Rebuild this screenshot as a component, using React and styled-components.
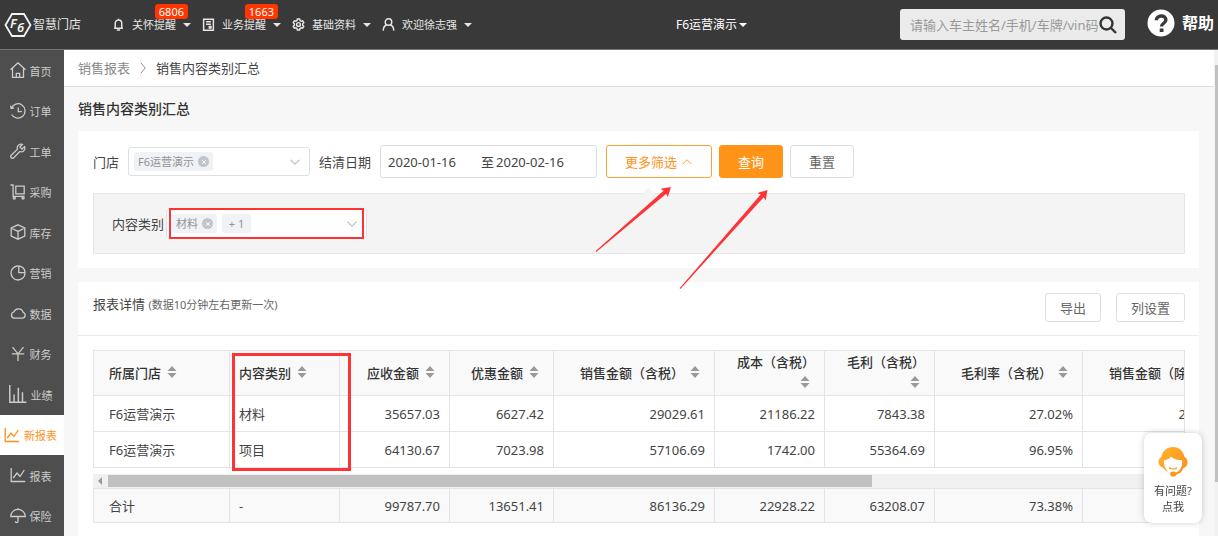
import styled, { createGlobalStyle } from 'styled-components'

const menus = [
    { icon: 'bell', label: '关怀提醒', badge: '6806' },
    { icon: 'doc', label: '业务提醒', badge: '1663' },
    { icon: 'gear', label: '基础资料' },
    { icon: 'user', label: '欢迎徐志强' },
]

const sideLinks = [
    { icon: 'home', label: '首页' },
    { icon: 'history', label: '订单' },
    { icon: 'wrench', label: '工单' },
    { icon: 'cart', label: '采购' },
    { icon: 'box', label: '库存' },
    { icon: 'pie', label: '营销' },
    { icon: 'cloud', label: '数据' },
    { icon: 'yen', label: '财务' },
    { icon: 'bars', label: '业绩' },
    { icon: 'chart', label: '新报表', active: true },
    { icon: 'chart', label: '报表' },
    { icon: 'umbrella', label: '保险' },
]

const columns = [
    { title: '所属门店', width: 136 },
    { title: '内容类别', width: 110 },
    { title: '应收金额', width: 110, num: true },
    { title: '优惠金额', width: 104, num: true },
    { title: '销售金额（含税）', width: 161, num: true },
    { title: '成本（含税）', width: 110, num: true },
    { title: '毛利（含税）', width: 110, num: true },
    { title: '毛利率（含税）', width: 148, num: true },
    { title: '销售金额（除税）', width: 161, num: true },
]

const rows = [
    ['F6运营演示', '材料', '35657.03', '6627.42', '29029.61', '21186.22', '7843.38', '27.02%', '25689.92'],
    ['F6运营演示', '项目', '64130.67', '7023.98', '57106.69', '1742.00', '55364.69', '96.95%', ''],
]

const total = ['合计', '-', '99787.70', '13651.41', '86136.29', '22928.22', '63208.07', '73.38%', '']

// line icons, all on a 16 x 16 grid
const shapes = {
    bell: <path d="M2.500 12.500h11M4 12.300V6.500a4 4 0 0 1 8 0v5.800M8 2.500V1M6 14.800h4" />,
    doc: <path d="M2 1.500h12v13.500h-12zM5 4.700h6M5 7.600h6M9 10.400h2v1.800H9z" />,
    gear: (
        <>
            <path d="M6.600 1.300h2.800l.5 1.900 1.300.7 1.900-.5 1.400 2.400-1.400 1.400v1.600l1.400 1.400-1.400 2.400-1.900-.5-1.300.7-.5 1.900H6.600l-.5-1.900-1.300-.7-1.900.5-1.400-2.400 1.400-1.400V7.200L1.500 5.800l1.400-2.400 1.900.5 1.300-.7z" />
            <circle cx="8" cy="8" r="2.300" />
        </>
    ),
    user: (
        <>
            <circle cx="8" cy="5" r="4" />
            <path d="M1.500 15.500c.2-4 1.800-6.200 4.200-7.200M14.500 15.500c-.2-4-1.800-6.200-4.200-7.200" />
        </>
    ),
    home: <path d="M.5 7.800 8 .8l7.500 7M2.500 6.300v9h11V6.300M6.300 15v-3.700h3.400V15" />,
    history: <path d="M1.200 5.200A7.200 7.200 0 1 1 1.600 11.500M.5 2.600l.7 2.800 2.900-.5M8.300 4.500v4.200h3.600" />,
    wrench: <path d="M14.600 3.600 12 6.100 9.900 4 12.400 1.400C10 .5 7.300 2 7.200 4.600c0 .7.1 1.100.3 1.600L1.200 12.200c-.8.8-.7 1.800 0 2.500s1.800.7 2.500 0l6.100-6.200c2.900 1.100 6-1.500 4.800-4.900z" />,
    cart: (
        <>
            <path d="M.5 1h2.600v11.400h11.400M5.800 2.200h8.400v7.600H5.800z" />
            <circle cx="4.300" cy="14" r="1.100" />
            <circle cx="13" cy="14" r="1.100" />
        </>
    ),
    box: <path d="M8 .8 14.800 4v8L8 15.200 1.200 12V4zM1.200 4 8 7.400 14.800 4M8 7.400v7.800" />,
    pie: <path d="M8 1a7 7 0 1 0 7 7.200M8.800 1v6.600h6.200A6.500 6.500 0 0 0 8.800 1z" />,
    cloud: <path d="M4 13.200h8.300a3 3 0 0 0 .9-5.800A5 5 0 0 0 3.800 7 3.200 3.200 0 0 0 4 13.200z" />,
    yen: <path d="M2.500 1.200 8 7.800l5.500-6.600M8 7.800V15M1.800 7.800h12.400" />,
    bars: <path d="M.7 0v15.300h14.800M4.500 15V8.500M8.300 15V2.500M12 15V6.500" />,
    chart: <path d="M1.200 1v13.500h14M3.200 11 7 6l3 3.500L14.300 3" />,
    umbrella: <path d="M.8 8.500a7.200 7.200 0 0 1 14.400 0zM8 1.500V0M8 8.500v4.800c0 1.700-2.600 1.700-2.700 0" />,
    down: <path d="m2 5 6 6 6-6" />,
    up: <path d="m2 11 6-6 6 6" />,
    right: <path d="m5 1 6 7-6 7" />,
    cross: <path d="m3 3 10 10M13 3 3 13" />,
}

const Icon = ({ name, size = 16, stroke = 1.3 }) => (
    <IconSvg width={size} height={size} viewBox="0 0 16 16" strokeWidth={stroke} aria-hidden="true">
        {shapes[name]}
    </IconSvg>
)

const Tag = ({ children, closable }) => (
    <TagBox>
        {children}
        {closable && (
            <TagClose type="button" aria-label="移除">
                <Icon name="cross" size={6} stroke={2.6} />
            </TagClose>
        )}
    </TagBox>
)

const MultiSelect = ({ id, width, options, children }) => (
    <SelectBox $width={width}>
        {children}
        <select id={id} defaultValue="">
            <option value=""></option>
            {options.map((o) => <option key={o}>{o}</option>)}
        </select>
        <Icon name="down" size={12} stroke={1.6} />
    </SelectBox>
)

const Cols = () => (
    <colgroup>
        {columns.map((c) => <Col key={c.title} $width={c.width} />)}
    </colgroup>
)

const Cells = ({ values }) => values.map((v, i) => (
    <Td key={columns[i].title} $num={columns[i].num}>{v}</Td>
))

const Header = () => (
    <TopBar>
        <Logo href="#home">
            <svg width="28" height="26" viewBox="0 0 28 26" aria-hidden="true">
                <path d="M8 2h12l6.500 11L20 24H8L1.500 13z" fill="none" stroke="#f2f2f2" strokeWidth="1.800" />
                <text x="6" y="16" fill="#f2f2f2">F</text>
                <text x="13" y="20" fill="#f2f2f2">6</text>
            </svg>
            智慧门店
        </Logo>
        <Menu>
            {menus.map((m) => (
                <MenuButton type="button" key={m.label}>
                    <Icon name={m.icon} size={13} stroke={1.8} />
                    <span>{m.label}</span>
                    <Caret />
                    {m.badge && <Badge>{m.badge}</Badge>}
                </MenuButton>
            ))}
        </Menu>
        <Spacer $grow={4} />
        <ShopButton type="button">F6运营演示<Caret /></ShopButton>
        <Spacer $grow={3} />
        <Search>
            <input type="text" aria-label="搜索" placeholder="请输入车主姓名/手机/车牌/vin码" />
            <button type="submit" aria-label="搜索">
                <svg width="18" height="18" viewBox="0 0 18 18" fill="none" stroke="#333" strokeWidth="2.400" aria-hidden="true">
                    <circle cx="7.500" cy="7.500" r="6" />
                    <path d="m12 12 5 5" />
                </svg>
            </button>
        </Search>
        <Help href="#help">
            <svg width="28" height="28" viewBox="0 0 28 28" aria-hidden="true">
                <circle cx="14" cy="14" r="13.500" fill="#fff" />
                <path d="M9.300 11.200c.1-5.600 9.600-5.600 9.600-.3 0 3.400-4.400 3.300-4.400 6.600" fill="none" stroke="#393939" strokeWidth="3.400" />
                <path d="M12.700 19.500h3.800V23h-3.800z" fill="#393939" />
            </svg>
            帮助
        </Help>
    </TopBar>
)

const Filters = () => (
    <Panel>
        <FilterRow>
            <label htmlFor="shop">门店</label>
            <MultiSelect id="shop" width={182} options={['F6运营演示']}>
                <Tag closable>F6运营演示</Tag>
            </MultiSelect>
            <label htmlFor="dateFrom">结清日期</label>
            <DateRange>
                <input id="dateFrom" type="text" defaultValue="2020-01-16" />
                <label htmlFor="dateTo">至</label>
                <input id="dateTo" type="text" defaultValue="2020-02-16" />
            </DateRange>
            <Actions>
                <Button type="button" $kind="outline">更多筛选<Icon name="up" size={12} stroke={1.2} /></Button>
                <Button type="button" $kind="primary">查询</Button>
                <Button type="button">重置</Button>
            </Actions>
        </FilterRow>
        <MoreFilters>
            <label htmlFor="category">内容类别</label>
            <Marked>
                <MultiSelect id="category" width={201} options={['材料', '项目']}>
                    <Tag closable>材料</Tag>
                    <Tag>+ 1</Tag>
                </MultiSelect>
            </Marked>
        </MoreFilters>
        <Arrows width="190" height="115" viewBox="0 0 190 115" aria-hidden="true">
            <path d="M5.700 71 73.600 10.700l-3-2L81 7l-3.200 10-1.600-3.300L6.300 72z" />
            <path d="m89.600 108.200 81.100-93.600-3.300-1.600 10.100-3-1.900 10.400-1.900-3.100-83.300 91.600z" />
        </Arrows>
    </Panel>
)

const Report = () => (
    <Panel $fill>
        <ReportHead>
            <h2>报表详情 <small>(数据10分钟左右更新一次)</small></h2>
            <Button type="button" $small>导出</Button>
            <Button type="button" $small>列设置</Button>
        </ReportHead>
        <TableArea>
            <TableClip>
                <Table>
                    <Cols />
                    <thead>
                        <tr>
                            {columns.map((c) => (
                                <Th key={c.title} $num={c.num}>
                                    {c.title}
                                    <Sort type="button" aria-label={c.title + '排序'}>
                                        <svg width="10" height="12" viewBox="0 0 10 12" fill="#999" aria-hidden="true">
                                            <path d="M5 0l4.500 5h-9zM5 12l4.500-5h-9z" />
                                        </svg>
                                    </Sort>
                                </Th>
                            ))}
                        </tr>
                    </thead>
                    <tbody>
                        {rows.map((r) => <tr key={r[1]}><Cells values={r} /></tr>)}
                    </tbody>
                </Table>
            </TableClip>
            <HScroll><i /><b /></HScroll>
            <TableClip>
                <Table $foot>
                    <Cols />
                    <tbody><tr><Cells values={total} /></tr></tbody>
                </Table>
            </TableClip>
            <ColumnMark />
        </TableArea>
    </Panel>
)

const App = () => (
    <>
        <GlobalStyle />
        <Page>
            <Header />
            <Body>
                <SideNav>
                    {sideLinks.map((l) => (
                        <SideLink href="#" key={l.label} $active={l.active}>
                            <Icon name={l.icon} size={l.icon === 'bars' ? 18 : 16} />
                            <span>{l.label}</span>
                        </SideLink>
                    ))}
                </SideNav>
                <Main>
                    <Breadcrumb>
                        <a href="#reports">销售报表</a>
                        <Icon name="right" size={12} />
                        <span>销售内容类别汇总</span>
                    </Breadcrumb>
                    <Content>
                        <h1>销售内容类别汇总</h1>
                        <Filters />
                        <Report />
                    </Content>
                </Main>
                <VScroll><i /></VScroll>
            </Body>
        </Page>
        <Service type="button">
            <svg width="30" height="30" viewBox="0 0 30 30" aria-hidden="true">
                <defs>
                    <linearGradient id="hair" x1="0" y1="0" x2="1" y2="1">
                        <stop offset="0" stopColor="#ffb52e" />
                        <stop offset="1" stopColor="#ff8a17" />
                    </linearGradient>
                </defs>
                <path d="M15 0C8.500 0 4.200 4.500 3.400 10 1.500 10.800.5 12.600.5 15s1.500 4.800 4.500 5.500C6.500 23 8.500 24.500 10 25 6.500 21 5.500 17 6 13c3.500 0 5.500-1.200 7-3.500 3 3 7.500 3.500 11 3.500.5 4-.3 7.200-2.200 9.800-1.300 1.500-2.300 2.200-3.800 2.700-1.500-1.700-6-1.200-6 1.500 0 3.200 5.600 3.700 6.500.6 3-.7 5.600-3 7-6.600 2.600-.8 4-3 4-5.500 0-2.700-1.100-4.500-3-5.400C25.600 4.500 21.500 0 15 0z" fill="url(#hair)" />
                <path d="M11 20.500c2 2 6 2 8 0" fill="none" stroke="#ff9a22" strokeWidth="1.200" />
            </svg>
            <span>有问题?</span>
            <span>点我</span>
        </Service>
    </>
)

const GlobalStyle = createGlobalStyle`
    *{
        box-sizing: border-box;
    }
    body{
        margin: 0;
        background-color: #f7f7f7;
        color: #444;
        font-size: 13px;
        line-height: 18px;
        font-family: "Noto Sans", "Noto Sans CJK SC", sans-serif;
    }
    button, input, select{
        font: inherit;
        color: inherit;
        margin: 0;
        padding: 0;
        border: none;
        background: none;
        outline: none;
    }
    button{
        cursor: pointer;
    }
    a{
        color: inherit;
        text-decoration: none;
    }
    h1, h2{
        margin: 0;
        font-weight: 500;
    }
`

const IconSvg = styled.svg`
    flex: none;
    fill: none;
    stroke: currentColor;
`

const Page = styled.div`
    min-height: 100vh;
    display: flex;
    flex-direction: column;
`

const TopBar = styled.header`
    height: 50px;
    flex: none;
    display: flex;
    align-items: center;
    padding: 0 4px;
    background-color: #393939;
    border-bottom: 1px solid #777;
    color: #e6e6e6;
    white-space: nowrap;
`

const Logo = styled.a`
    display: flex;
    align-items: center;
    gap: 1px;
    width: 108px;
    font-size: 12px;
    text{
        font-size: 13px;
        font-weight: 600;
        font-style: italic;
    }
`

const Menu = styled.nav`
    display: flex;
    gap: 11px;
`

const MenuButton = styled.button`
    position: relative;
    display: flex;
    align-items: center;
    font-size: 11px;
    span{
        margin-left: 7px;
    }
`

const Caret = styled.i`
    margin-left: 7px;
    border: 4px solid transparent;
    border-top-color: currentColor;
    border-bottom: none;
`

const Badge = styled.b`
    position: absolute;
    top: -12px;
    right: 3px;
    padding: 0 4px;
    border-radius: 3px;
    background-color: #ff3600;
    color: white;
    font-weight: 400;
    line-height: 15px;
`

const Spacer = styled.div`
    flex: ${(p) => p.$grow} 0 0;
`

const ShopButton = styled.button`
    display: flex;
    align-items: center;
    font-size: 12px;
    color: white;
    ${Caret}{
        margin-left: 2px;
    }
`

const Search = styled.form`
    width: 225px;
    height: 31px;
    display: flex;
    align-items: center;
    padding: 0 8px 0 10px;
    border-radius: 3px;
    background-color: #ebebeb;
    input{
        flex: 1;
        min-width: 0;
        color: #333;
    }
    input::placeholder{
        color: #999;
    }
    button{
        display: flex;
    }
`

const Help = styled.a`
    display: flex;
    align-items: center;
    gap: 7px;
    margin: -4px 0 0 22px;
    color: white;
    font-size: 16px;
    font-weight: 700;
`

const Body = styled.div`
    flex: 1;
    display: flex;
`

const SideNav = styled.nav`
    width: 64px;
    flex: none;
    display: flex;
    flex-direction: column;
    background-color: #4e4e4e;
`

const SideLink = styled.a`
    flex: 1;
    min-height: 40px;
    display: flex;
    align-items: center;
    justify-content: center;
    gap: 4px;
    padding-right: 3px;
    font-size: 11px;
    color: ${(p) => (p.$active ? '#ff8f1a' : '#ccc')};
    background-color: ${(p) => (p.$active ? 'white' : 'transparent')};
    span{
        padding-top: 3px;
    }
`

const Main = styled.main`
    flex: 1;
    min-width: 0;
    display: flex;
    flex-direction: column;
`

const Breadcrumb = styled.div`
    height: 37px;
    display: flex;
    align-items: center;
    gap: 7px;
    padding: 0 14px;
    background-color: white;
    border-bottom: 1px solid #ddd;
    a, svg{
        color: #888;
    }
`

const Content = styled.div`
    flex: 1;
    display: flex;
    flex-direction: column;
    padding: 0 15px 0 14px;
    h1{
        font-size: 14px;
        line-height: 44px;
        color: #333;
    }
`

const Panel = styled.section`
    position: relative;
    background-color: white;
    padding: ${(p) => (p.$fill ? '0' : '14px 14px 14px 15px')};
    margin-bottom: ${(p) => (p.$fill ? '0' : '14px')};
    flex: ${(p) => (p.$fill ? '1' : 'none')};
`

const FilterRow = styled.div`
    display: flex;
    align-items: center;
    gap: 9px;
`

const SelectBox = styled.div`
    width: ${(p) => p.$width}px;
    height: 29px;
    display: flex;
    align-items: center;
    gap: 5px;
    padding: 0 8px 0 5px;
    border: 1px solid #dcdfe6;
    border-radius: 3px;
    background-color: white;
    color: #c0c4cc;
    select{
        flex: 1;
        min-width: 0;
        height: 100%;
        appearance: none;
    }
`

const TagBox = styled.span`
    display: flex;
    align-items: center;
    justify-content: center;
    gap: 4px;
    min-width: 29px;
    height: 19px;
    padding: 0 4px;
    border-radius: 3px;
    background-color: #f0f2f5;
    color: #909399;
    font-size: 11px;
    white-space: nowrap;
`

const TagClose = styled.button`
    width: 11px;
    height: 11px;
    display: flex;
    align-items: center;
    justify-content: center;
    border-radius: 50%;
    background-color: #c0c4cc;
    color: white;
`

const DateRange = styled.div`
    width: 217px;
    height: 33px;
    display: flex;
    align-items: center;
    padding: 0 7px;
    border: 1px solid #dcdfe6;
    border-radius: 3px;
    input{
        flex: 1;
        min-width: 0;
    }
    label{
        margin-right: 2px;
    }
`

const Actions = styled.div`
    display: flex;
    gap: 7px;
`

const buttonColors = {
    plain: { text: '#666', fill: 'white', line: '#dcdfe6' },
    outline: { text: '#ff9419', fill: 'white', line: '#ffa033' },
    primary: { text: 'white', fill: '#ff9419', line: '#ff9419' },
}

const Button = styled.button`
    height: ${(p) => (p.$small ? 29 : 33)}px;
    display: flex;
    align-items: center;
    gap: 4px;
    padding: 0 ${(p) => (p.$small ? 14 : 18)}px;
    border: 1px solid ${(p) => buttonColors[p.$kind || 'plain'].line};
    border-radius: 3px;
    background-color: ${(p) => buttonColors[p.$kind || 'plain'].fill};
    color: ${(p) => buttonColors[p.$kind || 'plain'].text};
`

const MoreFilters = styled.div`
    position: relative;
    display: flex;
    align-items: center;
    gap: 2px;
    margin-top: 15px;
    padding: 15px 18px;
    background-color: #f4f4f4;
    border: 1px solid #e6e6e6;
    /* little pointer under the 更多筛选 button */
    &::before{
        content: '';
        position: absolute;
        top: -5px;
        left: 550px;
        width: 9px;
        height: 9px;
        background-color: #f4f4f4;
        transform: rotate(45deg);
    }
`

const Marked = styled.div`
    position: relative;
    &::after{
        content: '';
        position: absolute;
        inset: -1px 3px -1px 3px;
        border: 2px solid #ff3333;
        pointer-events: none;
    }
`

const Arrows = styled.svg`
    position: absolute;
    top: 49px;
    left: 512px;
    z-index: 1;
    fill: #ff3333;
    pointer-events: none;
`

const ReportHead = styled.div`
    display: flex;
    gap: 15px;
    padding: 11px 14px 13px 15px;
    border-bottom: 1px solid #eaeaea;
    h2{
        flex: 1;
        font-size: 13px;
        font-weight: 400;
        line-height: 22px;
    }
    small{
        font-size: 11px;
        color: #666;
    }
`

const TableArea = styled.div`
    position: relative;
    margin: 14px 14px 0 15px;
`

const TableClip = styled.div`
    overflow: hidden;
    border: 1px solid #e2e3eb;
    border-bottom: none;
`

const Table = styled.table`
    width: 1150px;
    table-layout: fixed;
    border-collapse: separate;
    border-spacing: 0;
    background-color: ${(p) => (p.$foot ? '#f9f9f9' : 'white')};
    td{
        height: ${(p) => (p.$foot ? 34 : 36)}px;
    }
`

const Col = styled.col`
    width: ${(p) => p.$width}px;
`

const Td = styled.td`
    padding: 0 9px;
    border-right: 1px solid #e2e3eb;
    border-bottom: 1px solid #e2e3eb;
    text-align: ${(p) => (p.$num ? 'right' : 'left')};
    &:first-child{
        padding-left: 15px;
    }
`

const Th = styled(Td).attrs({ as: 'th' })`
    height: 45px;
    background-color: #f9f9f9;
    color: #333;
    font-weight: 500;
    line-height: 21px;
`

const Sort = styled.button`
    margin: 0 5px 0 6px;
    line-height: 12px;
    svg{
        display: block;
    }
`

const HScroll = styled.div`
    height: 14px;
    margin-top: 6px;
    display: flex;
    align-items: center;
    background-color: #f0f0f0;
    i{
        margin: 0 6px 0 5px;
        border: 4px solid transparent;
        border-right-color: #999;
        border-left: none;
    }
    b{
        width: 70%;
        height: 12px;
        background-color: #c1c1c1;
    }
`

const ColumnMark = styled.div`
    position: absolute;
    top: 3px;
    left: 139px;
    width: 119px;
    height: 118px;
    border: 3px solid #ff3333;
    pointer-events: none;
`

const VScroll = styled.div`
    width: 4px;
    flex: none;
    padding: 15px 0 54px 1px;
    display: flex;
    background-color: #f1f1f1;
    i{
        flex: 1;
        background-color: #c1c1c1;
    }
`

const Service = styled.button`
    position: fixed;
    right: 16px;
    bottom: 13px;
    z-index: 2;
    width: 58px;
    height: 90px;
    display: flex;
    flex-direction: column;
    align-items: center;
    padding-top: 14px;
    border-radius: 8px;
    background-color: white;
    box-shadow: 0 0 6px rgba(0, 0, 0, .2);
    font-size: 11px;
    line-height: 16px;
    svg{
        flex: none;
        margin-bottom: 6px;
    }
`

export default App
